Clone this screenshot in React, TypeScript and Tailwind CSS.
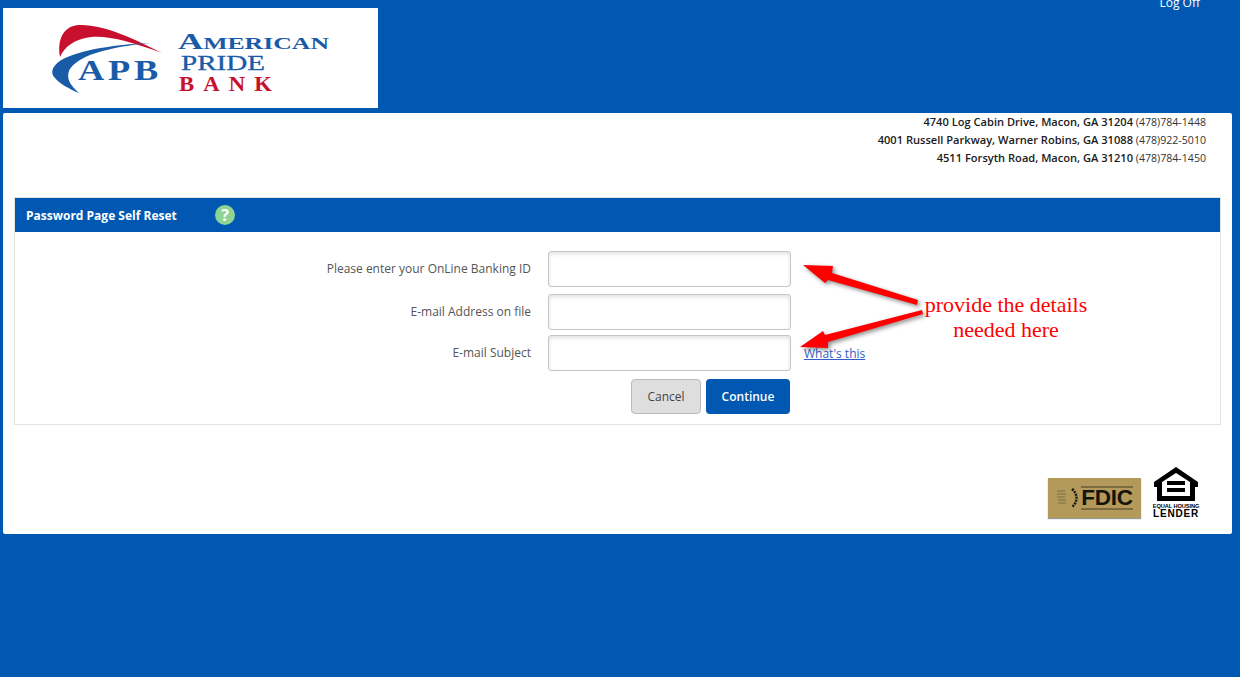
import React from "react";

const addresses = [
  { street: "4740 Log Cabin Drive, Macon, GA 31204", phone: "(478)784-1448" },
  { street: "4001 Russell Parkway, Warner Robins, GA 31088", phone: "(478)922-5010" },
  { street: "4511 Forsyth Road, Macon, GA 31210", phone: "(478)784-1450" },
];

const fields = [
  { label: "Please enter your OnLine Banking ID", gap: "mt-0" },
  { label: "E-mail Address on file", gap: "mt-[7px]" },
  { label: "E-mail Subject", gap: "mt-[5px]", help: true },
];

const Logo = () => (
  <svg viewBox="0 0 375 100" className="h-[100px] w-[375px] bg-white">
    <path d="M57 49 C54 32 60 18 76 17 C100 16 132 31 159 45 C130 34 104 27 88 29 C72 31 62 38 57 49 Z" fill="#c8102e" />
    <path d="M148 35 C120 36 85 40 62 50 C50 56 46 64 52 70 C56 75 66 81 76 85 C68 78 63 71 66 63 C70 54 85 46 104 42 C120 38 135 36 148 35 Z" fill="#1a5ba8" />
    <text x="75" y="72" fontFamily="'Liberation Serif', serif" fontWeight="700" fontSize="29" letterSpacing="3" fill="#1a5ba8" textLength="84" lengthAdjust="spacingAndGlyphs">APB</text>
    <text x="175" y="41" fontFamily="'Liberation Serif', serif" fontWeight="700" fill="#1a5ba8" textLength="151" lengthAdjust="spacingAndGlyphs">
      <tspan fontSize="23">A</tspan>
      <tspan fontSize="17">MERICAN</tspan>
    </text>
    <text x="178" y="62" fontFamily="'Liberation Serif', serif" fontSize="20" fill="#1a5ba8" stroke="#1a5ba8" strokeWidth="0.3" textLength="84" lengthAdjust="spacingAndGlyphs">PRIDE</text>
    <text x="176" y="83" fontFamily="'Liberation Serif', serif" fontWeight="700" fontSize="20" letterSpacing="8" fill="#c8102e" textLength="102" lengthAdjust="spacingAndGlyphs">BANK</text>
  </svg>
);

const Fdic = () => (
  <div className="flex h-10 w-[93px] items-center justify-start gap-[1px] bg-[#b39a5b] pl-2 shadow-[0_1px_1px_#999]">
    <svg viewBox="0 0 24 22" className="h-[22px] w-6 shrink-0">
      <path d="M1 4h8M1 7h9M1 10h8M2 13h8M2 16h8" stroke="#8d7d4e" strokeWidth="1.4" />
      <path d="M16 2 C22 7 22 15 16 20" stroke="#1c1a10" strokeWidth="2.5" fill="none" strokeDasharray="2 1" />
    </svg>
    <div className="flex flex-col items-center">
      <div className="h-[2px] w-[52px] bg-[#7a6c40]" />
      <span className="font-['Liberation_Sans',sans-serif] text-[22.5px] leading-[20px] font-bold tracking-[-0.2px] text-[#15130b]">FDIC</span>
      <div className="h-[2px] w-[52px] bg-[#7a6c40]" />
    </div>
  </div>
);

const HousingLender = () => (
  <div className="flex w-[44px] flex-col items-center font-['Liberation_Sans',sans-serif] text-black">
    <svg viewBox="0 0 44 34" className="h-[34px] w-11">
      <path fillRule="evenodd" d="M22 0 L44 15 V20 H41 V34 H3 V20 H0 V15 Z M8 15 V29 H36 V15 L22 6 Z" />
      <rect x="13" y="14" width="18" height="4" />
      <rect x="13" y="21" width="18" height="4" />
    </svg>
    <span className="mt-[2px] text-[5.7px] leading-[7px] font-bold tracking-[-0.1px] whitespace-nowrap">EQUAL HOUSING</span>
    <span className="text-[10px] leading-[8px] font-bold tracking-[0.8px]">LENDER</span>
  </div>
);

const Arrows = () => (
  <svg
    viewBox="0 0 130 90"
    className="pointer-events-none absolute top-[63px] left-[784px] h-[90px] w-[130px] drop-shadow-[2px_2px_2px_rgba(0,0,0,0.45)]"
  >
    <path d="M4 4 L34 5 L33 12 L119 39 L118 44 L29 19 L26 22 Z" fill="#ff0000" />
    <path d="M123 49 L26 74 L24 70 L1 86 L29 87 L29 81 L124 53 Z" fill="#ff0000" />
  </svg>
);

export default function App() {
  return (
    <div className="h-[677px] overflow-hidden bg-[#0058b3] font-['Open_Sans',sans-serif]">
      <header className="flex h-[113px] items-start justify-between pt-2 pl-[3px]">
        <Logo />
        <a className="mt-[-15px] mr-10 text-xs leading-5 text-white">Log Off</a>
      </header>

      <main className="ml-[3px] h-[421px] w-[1229px] rounded-[2px] bg-white">
        <div className="flex h-[54px] flex-col items-end pr-[26px] text-[10.6px] leading-[18px] text-[#333]">
          {addresses.map((a) => (
            <p key={a.phone}>
              <span className="text-[11.1px] font-semibold text-[#1a1a1a]">{a.street}</span> {a.phone}
            </p>
          ))}
        </div>

        <section className="relative mt-[30px] ml-[11px] h-[228px] w-[1207px] border border-[#e2e2e2]">
          <div className="flex h-[34px] items-center bg-[#0058b3] pl-[11px]">
            <h1 className="w-[189px] pt-px text-[12px] font-bold text-white">Password Page Self Reset</h1>
            <span className="flex h-5 w-5 items-center justify-center rounded-full bg-[#8ed493] text-base font-bold text-white">?</span>
          </div>

          <form className="pt-[19px]">
            {fields.map((f) => (
              <div key={f.label} className={`flex items-center ${f.gap}`}>
                <label className="w-[516px] text-right text-xs text-[#555]">{f.label}</label>
                <input
                  type="text"
                  className="ml-[17px] h-9 w-[243px] rounded-[3px] border border-[#c6c6c6] bg-white shadow-[inset_0_2px_4px_rgba(0,0,0,0.12)]"
                />
                {f.help && (
                  <a className="mt-[2px] ml-[13px] text-xs text-[#2f5fc4] underline">What's this</a>
                )}
              </div>
            ))}
            <div className="mt-2 ml-[616px] flex gap-[5px]">
              <button type="button" className="h-[35px] w-[70px] rounded-[4px] border border-[#bcbcbc] bg-[#dedede] text-xs text-[#444]">
                Cancel
              </button>
              <button type="button" className="h-[35px] w-[84px] rounded-[4px] bg-[#0058b3] text-xs font-semibold text-white">
                Continue
              </button>
            </div>
          </form>

          <Arrows />
          <p className="absolute top-[94px] left-[889px] w-[204px] text-center font-['Liberation_Serif',serif] text-[22px] leading-[25px] text-[#ff0000]">
            provide the details
            <br />
            needed here
          </p>
        </section>

        <div className="flex items-end justify-end gap-[13px] pt-[42px] pr-[34px]">
          <Fdic />
          <HousingLender />
        </div>
      </main>
    </div>
  );
}
